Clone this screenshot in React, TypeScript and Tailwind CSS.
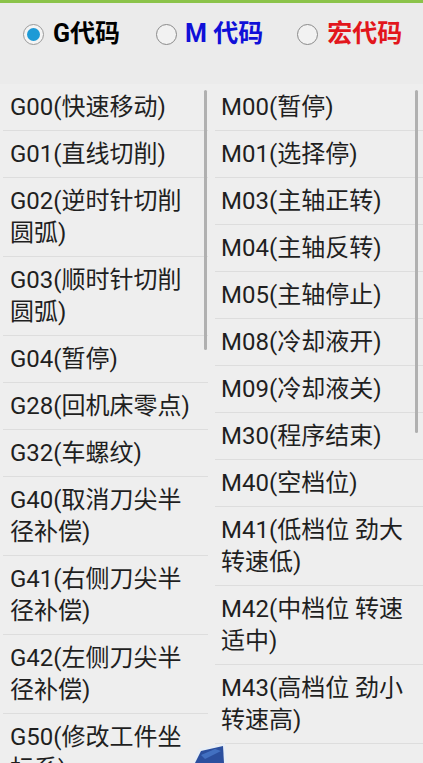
import React from "react";

const gCodes = [
  "G00(快速移动)",
  "G01(直线切削)",
  "G02(逆时针切削圆弧)",
  "G03(顺时针切削圆弧)",
  "G04(暂停)",
  "G28(回机床零点)",
  "G32(车螺纹)",
  "G40(取消刀尖半径补偿)",
  "G41(右侧刀尖半径补偿)",
  "G42(左侧刀尖半径补偿)",
  "G50(修改工件坐标系)",
];

const mCodes = [
  "M00(暂停)",
  "M01(选择停)",
  "M03(主轴正转)",
  "M04(主轴反转)",
  "M05(主轴停止)",
  "M08(冷却液开)",
  "M09(冷却液关)",
  "M30(程序结束)",
  "M40(空档位)",
  "M41(低档位 劲大转速低)",
  "M42(中档位 转速适中)",
  "M43(高档位 劲小转速高)",
];

function Radio({ checked }: { checked?: boolean }) {
  return (
    <span
      className={
        "flex h-[21px] w-[21px] items-center justify-center rounded-full border " +
        (checked ? "border-[#9a9a9a] bg-[#f4f4f4]" : "border-[#8a8a8a] bg-[#f2f2f2]")
      }
    >
      {checked && <span className="h-[13px] w-[13px] rounded-full bg-[#1d9ad6]" />}
    </span>
  );
}

export default function App() {
  const font = { fontFamily: '"Roboto", "Noto Sans CJK SC", sans-serif' };
  return (
    <div
      className="relative h-[763px] w-[423px] overflow-hidden bg-[#eeeeee] text-[#1f1f1f]"
      style={font}
    >
      <div className="h-[3px] bg-[#8bc34a]" />
      <div className="flex h-[81px] items-start bg-[#ebebeb] pt-[16px]">
        <div className="flex items-center">
          <div className="ml-[23px] flex items-center gap-[9px]">
            <Radio checked />
            <span className="text-[25px] font-bold leading-[30px] text-black">G代码</span>
          </div>
          <div className="ml-[36px] flex items-center gap-[8px]">
            <Radio />
            <span className="text-[25px] font-bold leading-[30px] text-[#1010d8]">M 代码</span>
          </div>
          <div className="ml-[34px] flex items-center gap-[9px]">
            <Radio />
            <span className="text-[25px] font-bold leading-[30px] text-[#e2161c]">宏代码</span>
          </div>
        </div>
      </div>
      <div className="flex">
        <div className="w-[208px] pl-[3px]">
          {gCodes.map((t) => (
            <div
              key={t}
              className="border-b border-[#dddddd] pl-[7px] pr-[4px] py-[7px] text-[24px] leading-[32px]"
            >
              {t}
            </div>
          ))}
        </div>
        <div className="w-[215px] pl-[7px]">
          {mCodes.map((t) => (
            <div
              key={t}
              className="border-b border-[#dddddd] pl-[6px] pr-[7px] py-[7px] text-[24px] leading-[32px]"
            >
              {t}
            </div>
          ))}
        </div>
      </div>
      <div className="absolute left-[204px] top-[90px] h-[260px] w-[3px] rounded bg-[#b0b0b0]" />
      <div className="absolute left-[415px] top-[90px] h-[343px] w-[3px] rounded bg-[#b0b0b0]" />
      <svg className="absolute left-[185px] top-[743px]" width="45" height="20" viewBox="0 0 45 20">
        <polygon points="8,20 14,6 40,0 42,20" fill="#e8eef5" />
        <polygon points="10,20 16,8 38,3 39,20" fill="#2b4f9e" />
        <polygon points="16,12 30,6 36,8 20,16" fill="#4d7fd0" opacity="0.7" />
      </svg>
    </div>
  );
}
